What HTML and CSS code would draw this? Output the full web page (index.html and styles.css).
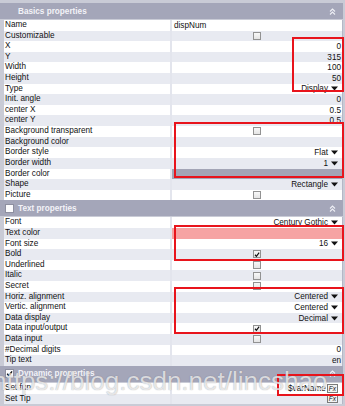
FILE: index.html
```html
<!DOCTYPE html>
<html>
<head>
<meta charset="utf-8">
<link rel="stylesheet" href="styles.css">
</head>
<body>
<div class="panel">
  <section class="section">
    <div class="sec-head">
      <span class="hbox none"></span>
      <span class="title">Basics properties</span>
      <svg class="collapse" width="7" height="7" viewBox="0 0 7 7"><polyline points="1,3.5 3.5,1 6,3.5"/><polyline points="1,6.5 3.5,4 6,6.5"/></svg>
    </div>
    <div class="rows">
      <div class="row"><div class="label">Name</div><div class="val left">dispNum</div></div>
      <div class="row"><div class="label">Customizable</div><div class="val center"><span class="cb"></span></div></div>
      <div class="row"><div class="label">X</div><div class="val num">0</div></div>
      <div class="row"><div class="label">Y</div><div class="val num">315</div></div>
      <div class="row"><div class="label">Width</div><div class="val num">100</div></div>
      <div class="row"><div class="label">Height</div><div class="val num">50</div></div>
      <div class="row"><div class="label">Type</div><div class="val drop">Display<svg class="arrow" width="7" height="5" viewBox="0 0 7 5"><polygon points="0,0.5 7,0.5 3.5,4.5"/></svg></div></div>
      <div class="row"><div class="label">Init. angle</div><div class="val num">0</div></div>
      <div class="row"><div class="label">center X</div><div class="val num">0.5</div></div>
      <div class="row"><div class="label">center Y</div><div class="val num">0.5</div></div>
      <div class="row"><div class="label">Background transparent</div><div class="val center"><span class="cb"></span></div></div>
      <div class="row"><div class="label">Background color</div><div class="val"></div></div>
      <div class="row"><div class="label">Border style</div><div class="val drop">Flat<svg class="arrow" width="7" height="5" viewBox="0 0 7 5"><polygon points="0,0.5 7,0.5 3.5,4.5"/></svg></div></div>
      <div class="row"><div class="label">Border width</div><div class="val drop">1<svg class="arrow" width="7" height="5" viewBox="0 0 7 5"><polygon points="0,0.5 7,0.5 3.5,4.5"/></svg></div></div>
      <div class="row"><div class="label">Border color</div><div class="val swatch-grey"></div></div>
      <div class="row"><div class="label">Shape</div><div class="val drop">Rectangle<svg class="arrow" width="7" height="5" viewBox="0 0 7 5"><polygon points="0,0.5 7,0.5 3.5,4.5"/></svg></div></div>
      <div class="row"><div class="label">Picture</div><div class="val center"><span class="cb"></span></div></div>
    </div>
  </section>

  <section class="section">
    <div class="sec-head">
      <span class="hbox"></span>
      <span class="title">Text properties</span>
      <svg class="collapse" width="7" height="7" viewBox="0 0 7 7"><polyline points="1,3.5 3.5,1 6,3.5"/><polyline points="1,6.5 3.5,4 6,6.5"/></svg>
    </div>
    <div class="rows">
      <div class="row"><div class="label">Font</div><div class="val drop">Century Gothic<svg class="arrow" width="7" height="5" viewBox="0 0 7 5"><polygon points="0,0.5 7,0.5 3.5,4.5"/></svg></div></div>
      <div class="row"><div class="label">Text color</div><div class="val swatch-pink"></div></div>
      <div class="row"><div class="label">Font size</div><div class="val drop">16<svg class="arrow" width="7" height="5" viewBox="0 0 7 5"><polygon points="0,0.5 7,0.5 3.5,4.5"/></svg></div></div>
      <div class="row"><div class="label">Bold</div><div class="val center"><span class="cb"><svg width="7" height="7" viewBox="0 0 7 7"><path d="M1.2 3.8 L2.8 5.6 L6 1.4"/></svg></span></div></div>
      <div class="row"><div class="label">Underlined</div><div class="val center"><span class="cb"></span></div></div>
      <div class="row"><div class="label">Italic</div><div class="val center"><span class="cb"></span></div></div>
      <div class="row"><div class="label">Secret</div><div class="val center"><span class="cb"></span></div></div>
      <div class="row"><div class="label">Horiz. alignment</div><div class="val drop">Centered<svg class="arrow" width="7" height="5" viewBox="0 0 7 5"><polygon points="0,0.5 7,0.5 3.5,4.5"/></svg></div></div>
      <div class="row"><div class="label">Vertic. alignment</div><div class="val drop">Centered<svg class="arrow" width="7" height="5" viewBox="0 0 7 5"><polygon points="0,0.5 7,0.5 3.5,4.5"/></svg></div></div>
      <div class="row"><div class="label">Data display</div><div class="val drop">Decimal<svg class="arrow" width="7" height="5" viewBox="0 0 7 5"><polygon points="0,0.5 7,0.5 3.5,4.5"/></svg></div></div>
      <div class="row"><div class="label">Data input/output</div><div class="val center"><span class="cb"><svg width="7" height="7" viewBox="0 0 7 7"><path d="M1.2 3.8 L2.8 5.6 L6 1.4"/></svg></span></div></div>
      <div class="row"><div class="label">Data input</div><div class="val center"><span class="cb"></span></div></div>
      <div class="row"><div class="label">#Decimal digits</div><div class="val num">0</div></div>
      <div class="row"><div class="label">Tip text</div><div class="val num">en</div></div>
    </div>
  </section>

  <section class="section">
    <div class="sec-head">
      <span class="hbox"><svg width="7" height="7" viewBox="0 0 7 7"><path d="M1.2 3.8 L2.8 5.6 L6 1.4"/></svg></span>
      <span class="title">Dynamic properties</span>
      <svg class="collapse" width="7" height="7" viewBox="0 0 7 7"><polyline points="1,3.5 3.5,1 6,3.5"/><polyline points="1,6.5 3.5,4 6,6.5"/></svg>
    </div>
    <div class="rows">
      <div class="row"><div class="label">Set fun</div><div class="val num">$varName<span class="fx">Fx</span></div></div>
      <div class="row"><div class="label">Set Tip</div><div class="val num"><span class="fx">Fx</span></div></div>
    </div>
  </section>

  <div class="annot a1"></div>
  <div class="annot a2"></div>
  <div class="annot a3"></div>
  <div class="annot a4"></div>
  <div class="annot a5"></div>

  <div class="watermark">https://blog.csdn.net/lincshao</div>
</div>
</body>
</html>
```

FILE: styles.css
```css
html, body {
  margin: 0;
  padding: 0;
}
body {
  width: 345px;
  height: 406px;
  overflow: hidden;
  background: #d6d8e0;
}
.panel {
  position: relative;
  box-sizing: border-box;
  width: 345px;
  height: 406px;
  padding: 3px 2px 0 0;
  background: #c9cbd6;
  font-family: "Liberation Sans", Arial, sans-serif;
  font-size: 8.2px;
  color: #111;
  overflow: hidden;
}
.section {
  display: flex;
  flex-direction: column;
}
.sec-head {
  height: 16px;
  margin-bottom: 1px;
  background: #a4a6b9;
  display: flex;
  align-items: center;
  padding: 0 7px 0 5px;
  color: #f3f3f8;
  font-weight: bold;
}
.hbox {
  width: 7px;
  height: 7px;
  border: 1px solid #8d8fa0;
  background: #fbfbfd;
  margin-right: 4px;
  display: flex;
  align-items: center;
  justify-content: center;
}
.hbox.none {
  visibility: hidden;
}
.hbox svg path {
  fill: none;
  stroke: #111;
  stroke-width: 1.4;
}
.title {
  flex: 1;
}
.collapse polyline {
  fill: none;
  stroke: #eef0f6;
  stroke-width: 1.1;
}
.rows {
  margin-left: 4px;
  border-right: 1px solid #b5b7c6;
  display: flex;
  flex-direction: column;
}
.row {
  height: 10.62px;
  display: grid;
  grid-template-columns: 168px 1fr;
  background: #ffffff;
}
.row:nth-child(even) {
  background: #e8eaf1;
}
.label {
  padding-left: 1px;
  line-height: 10.62px;
  white-space: nowrap;
  overflow: hidden;
  border-right: 2px solid #e3e5ed;
}
.val {
  display: flex;
  align-items: center;
  white-space: nowrap;
  min-width: 0;
}
.val.left {
  padding-left: 2px;
}
.val.num {
  justify-content: flex-end;
  padding-right: 1px;
}
.val.drop {
  justify-content: flex-end;
  padding-right: 4px;
}
.val.center {
  justify-content: center;
}
.arrow {
  margin-left: 3px;
}
.arrow polygon {
  fill: #111;
}
.swatch-grey {
  background: #a3a5b6;
}
.swatch-pink {
  background: #f6a3a3;
}
.cb {
  box-sizing: border-box;
  width: 8px;
  height: 8px;
  border: 1px solid #929292;
  background: linear-gradient(#f8f8f8, #e4e4e4);
  display: flex;
  align-items: center;
  justify-content: center;
}
.cb svg path {
  fill: none;
  stroke: #111;
  stroke-width: 1.4;
}
.fx {
  box-sizing: border-box;
  height: 9px;
  line-height: 7px;
  padding: 0 1px;
  margin-left: 1px;
  margin-right: 3px;
  border: 1px solid #7a7a7a;
  font-size: 6.5px;
  font-style: italic;
  background: #f2f2f2;
}
.annot {
  position: absolute;
  box-sizing: border-box;
  border: 2px solid #e8141c;
}
.a1 { left: 292px; top: 37px; width: 52px; height: 55px; }
.a2 { left: 174px; top: 122px; width: 170px; height: 56px; }
.a3 { left: 174px; top: 225px; width: 170px; height: 36px; }
.a4 { left: 174px; top: 287px; width: 170px; height: 47px; }
.a5 { left: 277px; top: 374px; width: 67px; height: 22px; }
.watermark {
  position: absolute;
  left: -8px;
  top: 368px;
  font-family: "Liberation Sans", Arial, sans-serif;
  font-size: 26px;
  line-height: 26px;
  white-space: nowrap;
  color: rgba(255, 255, 255, 0.72);
  text-shadow: 0 0 1px rgba(80, 80, 90, 0.55);
  pointer-events: none;
}
```
